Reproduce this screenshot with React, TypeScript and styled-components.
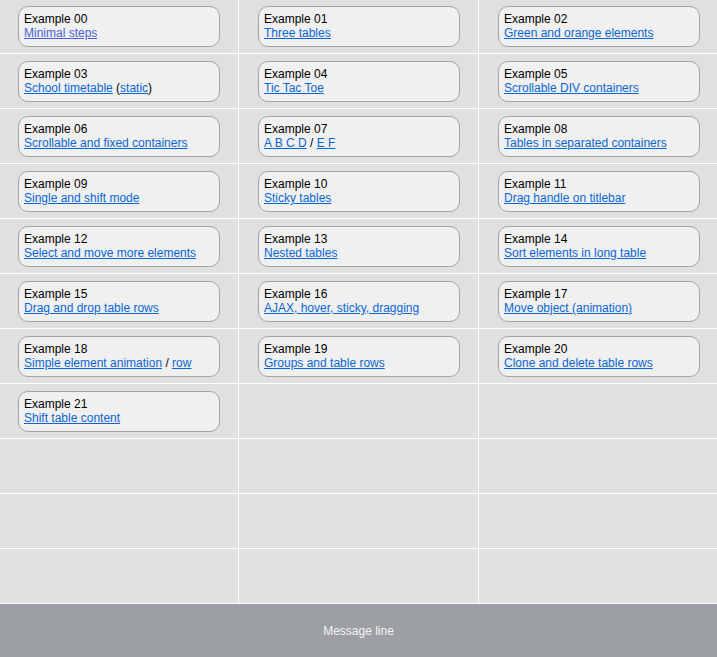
import React from "react";
import styled, { createGlobalStyle } from "styled-components";

const GlobalStyle = createGlobalStyle`
  html, body {
    margin: 0;
    padding: 0;
    height: 100%;
    overflow: hidden;
    background: #ffffff;
    font-family: "Liberation Sans", Arial, sans-serif;
    font-size: 12px;
  }
`;

const Page = styled.div`
  display: flex;
  flex-direction: column;
  height: 657px;
  overflow: hidden;
`;

const Table = styled.div`
  display: grid;
  grid-template-columns: 238px 239px 238px;
  grid-auto-rows: 54px;
  gap: 1px;
  margin-top: -1px;
  padding-bottom: 1px;
  background: #ffffff;
`;

const Cell = styled.div<{ $first?: boolean }>`
  background: #e0e0e0;
  box-sizing: border-box;
  padding: 7px 0 0 ${(p) => (p.$first ? 18 : 19)}px;
`;

const Card = styled.div`
  box-sizing: border-box;
  width: 202px;
  height: 41px;
  padding: 5px 5px;
  border: 1px solid #a3a3a3;
  border-radius: 10px;
  background: #f0f0f0;
  color: #000000;
  line-height: 14px;
  white-space: nowrap;
`;

const Title = styled.div``;

const Links = styled.div``;

const Link = styled.a<{ $visited?: boolean }>`
  color: ${(p) => (p.$visited ? "#4a62d8" : "#0a66d4")};
  text-decoration: underline;
  cursor: pointer;
`;

const MessageLine = styled.div`
  height: 53px;
  line-height: 54px;
  background: #9b9ea2;
  color: #f5f5f5;
  text-align: center;
  font-size: 12px;
`;

type Part = string | { link: string; visited?: boolean };

const examples: Part[][] = [
  [{ link: "Minimal steps", visited: true }],
  [{ link: "Three tables" }],
  [{ link: "Green and orange elements" }],
  [{ link: "School timetable" }, " (", { link: "static" }, ")"],
  [{ link: "Tic Tac Toe" }],
  [{ link: "Scrollable DIV containers" }],
  [{ link: "Scrollable and fixed containers" }],
  [{ link: "A B C D" }, " / ", { link: "E F" }],
  [{ link: "Tables in separated containers" }],
  [{ link: "Single and shift mode" }],
  [{ link: "Sticky tables" }],
  [{ link: "Drag handle on titlebar" }],
  [{ link: "Select and move more elements" }],
  [{ link: "Nested tables" }],
  [{ link: "Sort elements in long table" }],
  [{ link: "Drag and drop table rows" }],
  [{ link: "AJAX, hover, sticky, dragging" }],
  [{ link: "Move object (animation)" }],
  [{ link: "Simple element animation" }, " / ", { link: "row" }],
  [{ link: "Groups and table rows" }],
  [{ link: "Clone and delete table rows" }],
  [{ link: "Shift table content" }],
];

const TOTAL_CELLS = 33;

export default function App() {
  return (
    <Page>
      <GlobalStyle />
      <Table>
        {Array.from({ length: TOTAL_CELLS }).map((_, i) => {
          const parts = examples[i];
          return (
            <Cell key={i} $first={i % 3 === 0}>
              {parts && (
                <Card>
                  <Title>Example {String(i).padStart(2, "0")}</Title>
                  <Links>
                    {parts.map((p, j) =>
                      typeof p === "string" ? (
                        <span key={j}>{p}</span>
                      ) : (
                        <Link key={j} href="#" $visited={p.visited}>
                          {p.link}
                        </Link>
                      )
                    )}
                  </Links>
                </Card>
              )}
            </Cell>
          );
        })}
      </Table>
      <MessageLine>Message line</MessageLine>
    </Page>
  );
}
